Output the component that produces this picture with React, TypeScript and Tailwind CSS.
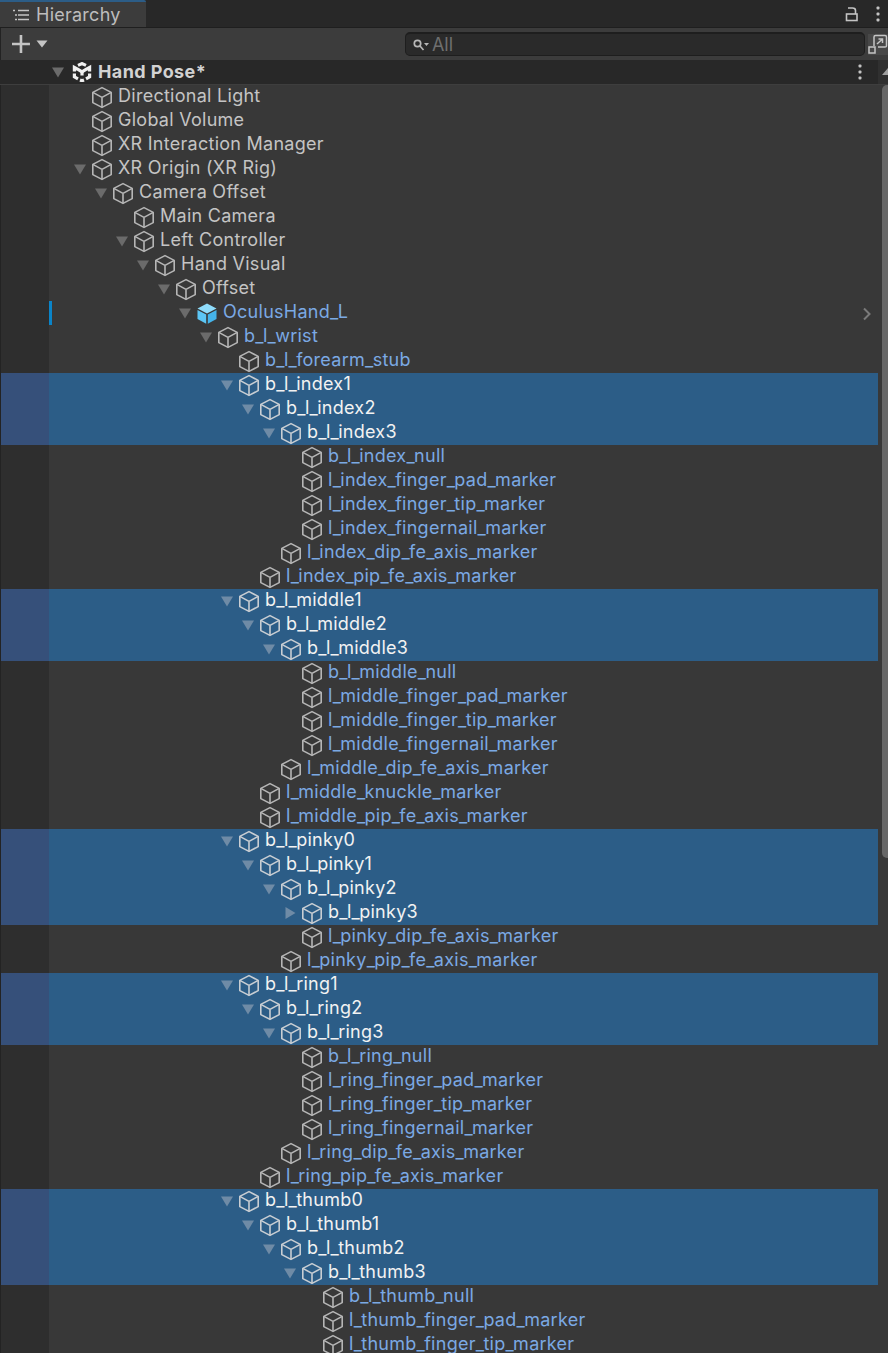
import React from "react";

type Row = { d: number; t: string; a?: "down" | "right"; s?: boolean; c?: "w" | "b"; prefab?: boolean };

const rows: Row[] = [
  { d: 0, t: "Directional Light", c: "w" },
  { d: 0, t: "Global Volume", c: "w" },
  { d: 0, t: "XR Interaction Manager", c: "w" },
  { d: 0, t: "XR Origin (XR Rig)", a: "down", c: "w" },
  { d: 1, t: "Camera Offset", a: "down", c: "w" },
  { d: 2, t: "Main Camera", c: "w" },
  { d: 2, t: "Left Controller", a: "down", c: "w" },
  { d: 3, t: "Hand Visual", a: "down", c: "w" },
  { d: 4, t: "Offset", a: "down", c: "w" },
  { d: 5, t: "OculusHand_L", a: "down", prefab: true },
  { d: 6, t: "b_l_wrist", a: "down" },
  { d: 7, t: "b_l_forearm_stub" },
  { d: 7, t: "b_l_index1", a: "down", s: true },
  { d: 8, t: "b_l_index2", a: "down", s: true },
  { d: 9, t: "b_l_index3", a: "down", s: true },
  { d: 10, t: "b_l_index_null" },
  { d: 10, t: "l_index_finger_pad_marker" },
  { d: 10, t: "l_index_finger_tip_marker" },
  { d: 10, t: "l_index_fingernail_marker" },
  { d: 9, t: "l_index_dip_fe_axis_marker" },
  { d: 8, t: "l_index_pip_fe_axis_marker" },
  { d: 7, t: "b_l_middle1", a: "down", s: true },
  { d: 8, t: "b_l_middle2", a: "down", s: true },
  { d: 9, t: "b_l_middle3", a: "down", s: true },
  { d: 10, t: "b_l_middle_null" },
  { d: 10, t: "l_middle_finger_pad_marker" },
  { d: 10, t: "l_middle_finger_tip_marker" },
  { d: 10, t: "l_middle_fingernail_marker" },
  { d: 9, t: "l_middle_dip_fe_axis_marker" },
  { d: 8, t: "l_middle_knuckle_marker" },
  { d: 8, t: "l_middle_pip_fe_axis_marker" },
  { d: 7, t: "b_l_pinky0", a: "down", s: true },
  { d: 8, t: "b_l_pinky1", a: "down", s: true },
  { d: 9, t: "b_l_pinky2", a: "down", s: true },
  { d: 10, t: "b_l_pinky3", a: "right", s: true },
  { d: 10, t: "l_pinky_dip_fe_axis_marker" },
  { d: 9, t: "l_pinky_pip_fe_axis_marker" },
  { d: 7, t: "b_l_ring1", a: "down", s: true },
  { d: 8, t: "b_l_ring2", a: "down", s: true },
  { d: 9, t: "b_l_ring3", a: "down", s: true },
  { d: 10, t: "b_l_ring_null" },
  { d: 10, t: "l_ring_finger_pad_marker" },
  { d: 10, t: "l_ring_finger_tip_marker" },
  { d: 10, t: "l_ring_fingernail_marker" },
  { d: 9, t: "l_ring_dip_fe_axis_marker" },
  { d: 8, t: "l_ring_pip_fe_axis_marker" },
  { d: 7, t: "b_l_thumb0", a: "down", s: true },
  { d: 8, t: "b_l_thumb1", a: "down", s: true },
  { d: 9, t: "b_l_thumb2", a: "down", s: true },
  { d: 10, t: "b_l_thumb3", a: "down", s: true },
  { d: 11, t: "b_l_thumb_null" },
  { d: 11, t: "l_thumb_finger_pad_marker" },
  { d: 11, t: "l_thumb_finger_tip_marker" },
];

function Cube({ color }: { color: string }) {
  return (
    <svg width="22" height="24" viewBox="0 0 22 24" fill="none" stroke={color} strokeWidth="1.6" strokeLinejoin="round">
      <path d="M11 2.6 L20.2 7.4 V17.6 L11 22.4 L1.8 17.6 V7.4 Z" />
      <path d="M1.8 7.4 L11 12.4 L20.2 7.4 M11 12.4 V22.4" />
    </svg>
  );
}

function PrefabCube() {
  return (
    <svg width="22" height="24" viewBox="0 0 22 24">
      <path d="M11 2.5 L20.5 7.5 L11 12.5 L1.5 7.5 Z" fill="#8fdcfb" />
      <path d="M1.5 9 L10.2 13.5 V22.8 L1.5 18 Z" fill="#5cc6f5" />
      <path d="M20.5 9 L11.8 13.5 V22.8 L20.5 18 Z" fill="#45b4ea" />
    </svg>
  );
}

function Arrow({ dir, selected }: { dir: "down" | "right"; selected?: boolean }) {
  const color = selected ? "#6f8ba6" : "#6b6b6b";
  return (
    <svg width="14" height="14" viewBox="0 0 14 14" fill={color}>
      {dir === "down" ? <path d="M1 2.5 H13 L7 12.5 Z" /> : <path d="M2.5 1 L12.5 7 L2.5 13 Z" />}
    </svg>
  );
}

function Dots() {
  return (
    <svg width="4" height="16" viewBox="0 0 4 16" fill="#c4c4c4">
      <rect x="0.5" y="0.5" width="3" height="3" rx="1" />
      <rect x="0.5" y="6.5" width="3" height="3" rx="1" />
      <rect x="0.5" y="12.5" width="3" height="3" rx="1" />
    </svg>
  );
}

function Label({ text }: { text: string }) {
  const parts = text.split("_");
  return (
    <>
      {parts.map((p, i) => (
        <React.Fragment key={i}>
          {i > 0 && <span className="tracking-[-0.6px]">_</span>}
          {p}
        </React.Fragment>
      ))}
    </>
  );
}

function TreeRow({ r }: { r: Row }) {
  const text = r.s ? "text-[#f2f2f2]" : r.c === "w" ? "text-[#c4c4c4]" : "text-[#7ba9e4]";
  return (
    <div className={`flex h-6 ${r.s ? "bg-[#2c5d87]" : ""}`}>
      <div className={`w-[48px] shrink-0 ${r.s ? "bg-[#36507a]" : ""}`} />
      <div className="flex items-center" style={{ paddingLeft: 25 + r.d * 21 }}>
        <div className="w-[18px] shrink-0 flex justify-start -ml-[1px]">{r.a && <Arrow dir={r.a} selected={r.s} />}</div>
        <div className="shrink-0">{r.prefab ? <PrefabCube /> : <Cube color={r.s ? "#c9ced3" : "#b6b6b6"} />}</div>
        <span className={`ml-[5px] pb-[2px] whitespace-nowrap text-[18px] leading-6 tracking-[0.27px] ${text}`}>
          <Label text={r.t} />
        </span>
      </div>
    </div>
  );
}

export default function App() {
  return (
    <div className="w-[888px] h-[1353px] overflow-hidden bg-[#383838] font-['Inter',sans-serif] flex flex-col">
      {/* tab strip */}
      <div className="h-[28px] shrink-0 bg-[#282828] border-b border-[#1f1f1f] flex items-stretch">
        <div className="w-[146px] border-t-2 border-[#2c5d87] bg-[#3c3c3c] flex items-center pl-[12px] gap-[6px] rounded-tr-[2px]">
          <svg width="18" height="14" viewBox="0 0 18 14" fill="none" stroke="#c4c4c4" strokeWidth="1.6">
            <path d="M1 2.5 H3 M6 2.5 H17 M3 7 H5 M6 7 H17 M3 11.5 H5 M6 11.5 H17" />
          </svg>
          <span className="text-[18px] leading-6 tracking-[0.25px] text-[#bdbdbd]">Hierarchy</span>
        </div>
        <div className="ml-auto flex items-center gap-[17px] pr-[8px]">
          <svg width="14" height="16" viewBox="0 0 14 16" fill="none" stroke="#c4c4c4" strokeWidth="1.6">
            <rect x="1.5" y="8" width="10.5" height="6.5" />
            <path d="M3 2 H7.5 Q10.5 2 10.5 4.5 V8" />
          </svg>
          <Dots />
        </div>
      </div>
      {/* toolbar */}
      <div className="h-[32px] shrink-0 bg-[#3c3c3c] border-l border-[#232323] flex items-center">
        <svg className="ml-[10px]" width="20" height="20" viewBox="0 0 20 20" stroke="#c4c4c4" strokeWidth="2.6">
          <path d="M10 1 V19 M1 10 H19" />
        </svg>
        <svg className="ml-[5px]" width="12" height="8" viewBox="0 0 12 8" fill="#c4c4c4">
          <path d="M0.5 0.5 H11.5 L6 7.5 Z" />
        </svg>
        <div className="ml-[357px] w-[461px] h-[24px] rounded-[5px] bg-[#2a2a2a] border border-t-2 border-[#1e1e1e] flex items-center pl-[6px]">
          <svg width="20" height="14" viewBox="0 0 20 14" fill="none" stroke="#b8b8b8" strokeWidth="1.7">
            <circle cx="5.5" cy="5.5" r="3.2" />
            <path d="M8 8 L11.5 12" />
            <path d="M12 5 H17 L14.5 8 Z" fill="#b8b8b8" stroke="none" />
          </svg>
          <span className="text-[18px] leading-5 text-[#6f6f6f]">All</span>
        </div>
        <div className="ml-[3px] flex-1 h-[21px] bg-[#484848] flex items-center justify-center">
          <svg width="20" height="20" viewBox="0 0 20 20" fill="none" stroke="#c4c4c4" strokeWidth="1.5">
            <path d="M6 12 V3 Q6 1.5 7.5 1.5 H17 Q18.5 1.5 18.5 3 V12 Q18.5 13 17 13 H10" />
            <rect x="1" y="13" width="6" height="6" fill="#484848" />
            <path d="M9 10 L14.5 5 M10.5 5 H14.5 V9" />
          </svg>
        </div>
      </div>
      {/* scene header */}
      <div className="h-[24px] shrink-0 bg-[#282828] flex items-center">
        <div className="ml-[51px] w-[16px] shrink-0"><Arrow dir="down" /></div>
        <svg className="ml-[5px] shrink-0" width="20" height="20" viewBox="0 0 20 20" fill="none" stroke="#f0f0f0" strokeWidth="3.2" strokeLinejoin="miter">
          <path d="M6 3.4 L10 1.6 L14 3.4" />
          <path d="M2.4 9.5 V5.4 L6 7.4 L10 9.8 L14 7.4 L17.6 5.4 V9.5" />
          <path d="M10 10 V13.5" />
          <path d="M2.4 11.5 V14.8 L6 16.8 M17.6 11.5 V14.8 L14 16.8" />
          <path d="M8 18 L10 18.8 L12 18" />
        </svg>
        <span className="ml-[6px] text-[18px] font-bold tracking-[0.4px] leading-6 text-[#d2d2d2]">Hand Pose*</span>
        <div className="ml-auto mr-[16px]"><Dots /></div>
        <div className="w-[10px] self-stretch shrink-0 bg-[#303030] flex items-center justify-end">
          <svg width="6" height="8" viewBox="0 0 6 8" fill="#a0a0a0">
            <path d="M6 0 V7 H0 Z" />
          </svg>
        </div>
      </div>
      {/* body */}
      <div className="h-px shrink-0 bg-[#3e3e3e]" />
      <div className="flex-1 flex min-h-0 bg-[#383838] border-l border-[#232323]">
        <div className="relative w-[877px] shrink-0 overflow-hidden bg-[linear-gradient(to_right,#2e2e2e_48px,#383838_48px)]">
          {rows.map((r) => (
            <TreeRow key={r.t} r={r} />
          ))}
          <div className="absolute left-[48px] top-[216px] w-[3px] h-[24px] bg-[#0a84c8]" />
          <svg className="absolute left-[861px] top-[222px]" width="10" height="14" viewBox="0 0 10 14" fill="none" stroke="#7a7a7a" strokeWidth="2">
            <path d="M2 1.5 L7.5 7 L2 12.5" />
          </svg>
        </div>
        <div className="w-[10px] shrink-0 bg-[#383838]">
          <div className="ml-[4px] h-[773px] rounded-l-[5px] bg-[#676767]" />
        </div>
      </div>
    </div>
  );
}
